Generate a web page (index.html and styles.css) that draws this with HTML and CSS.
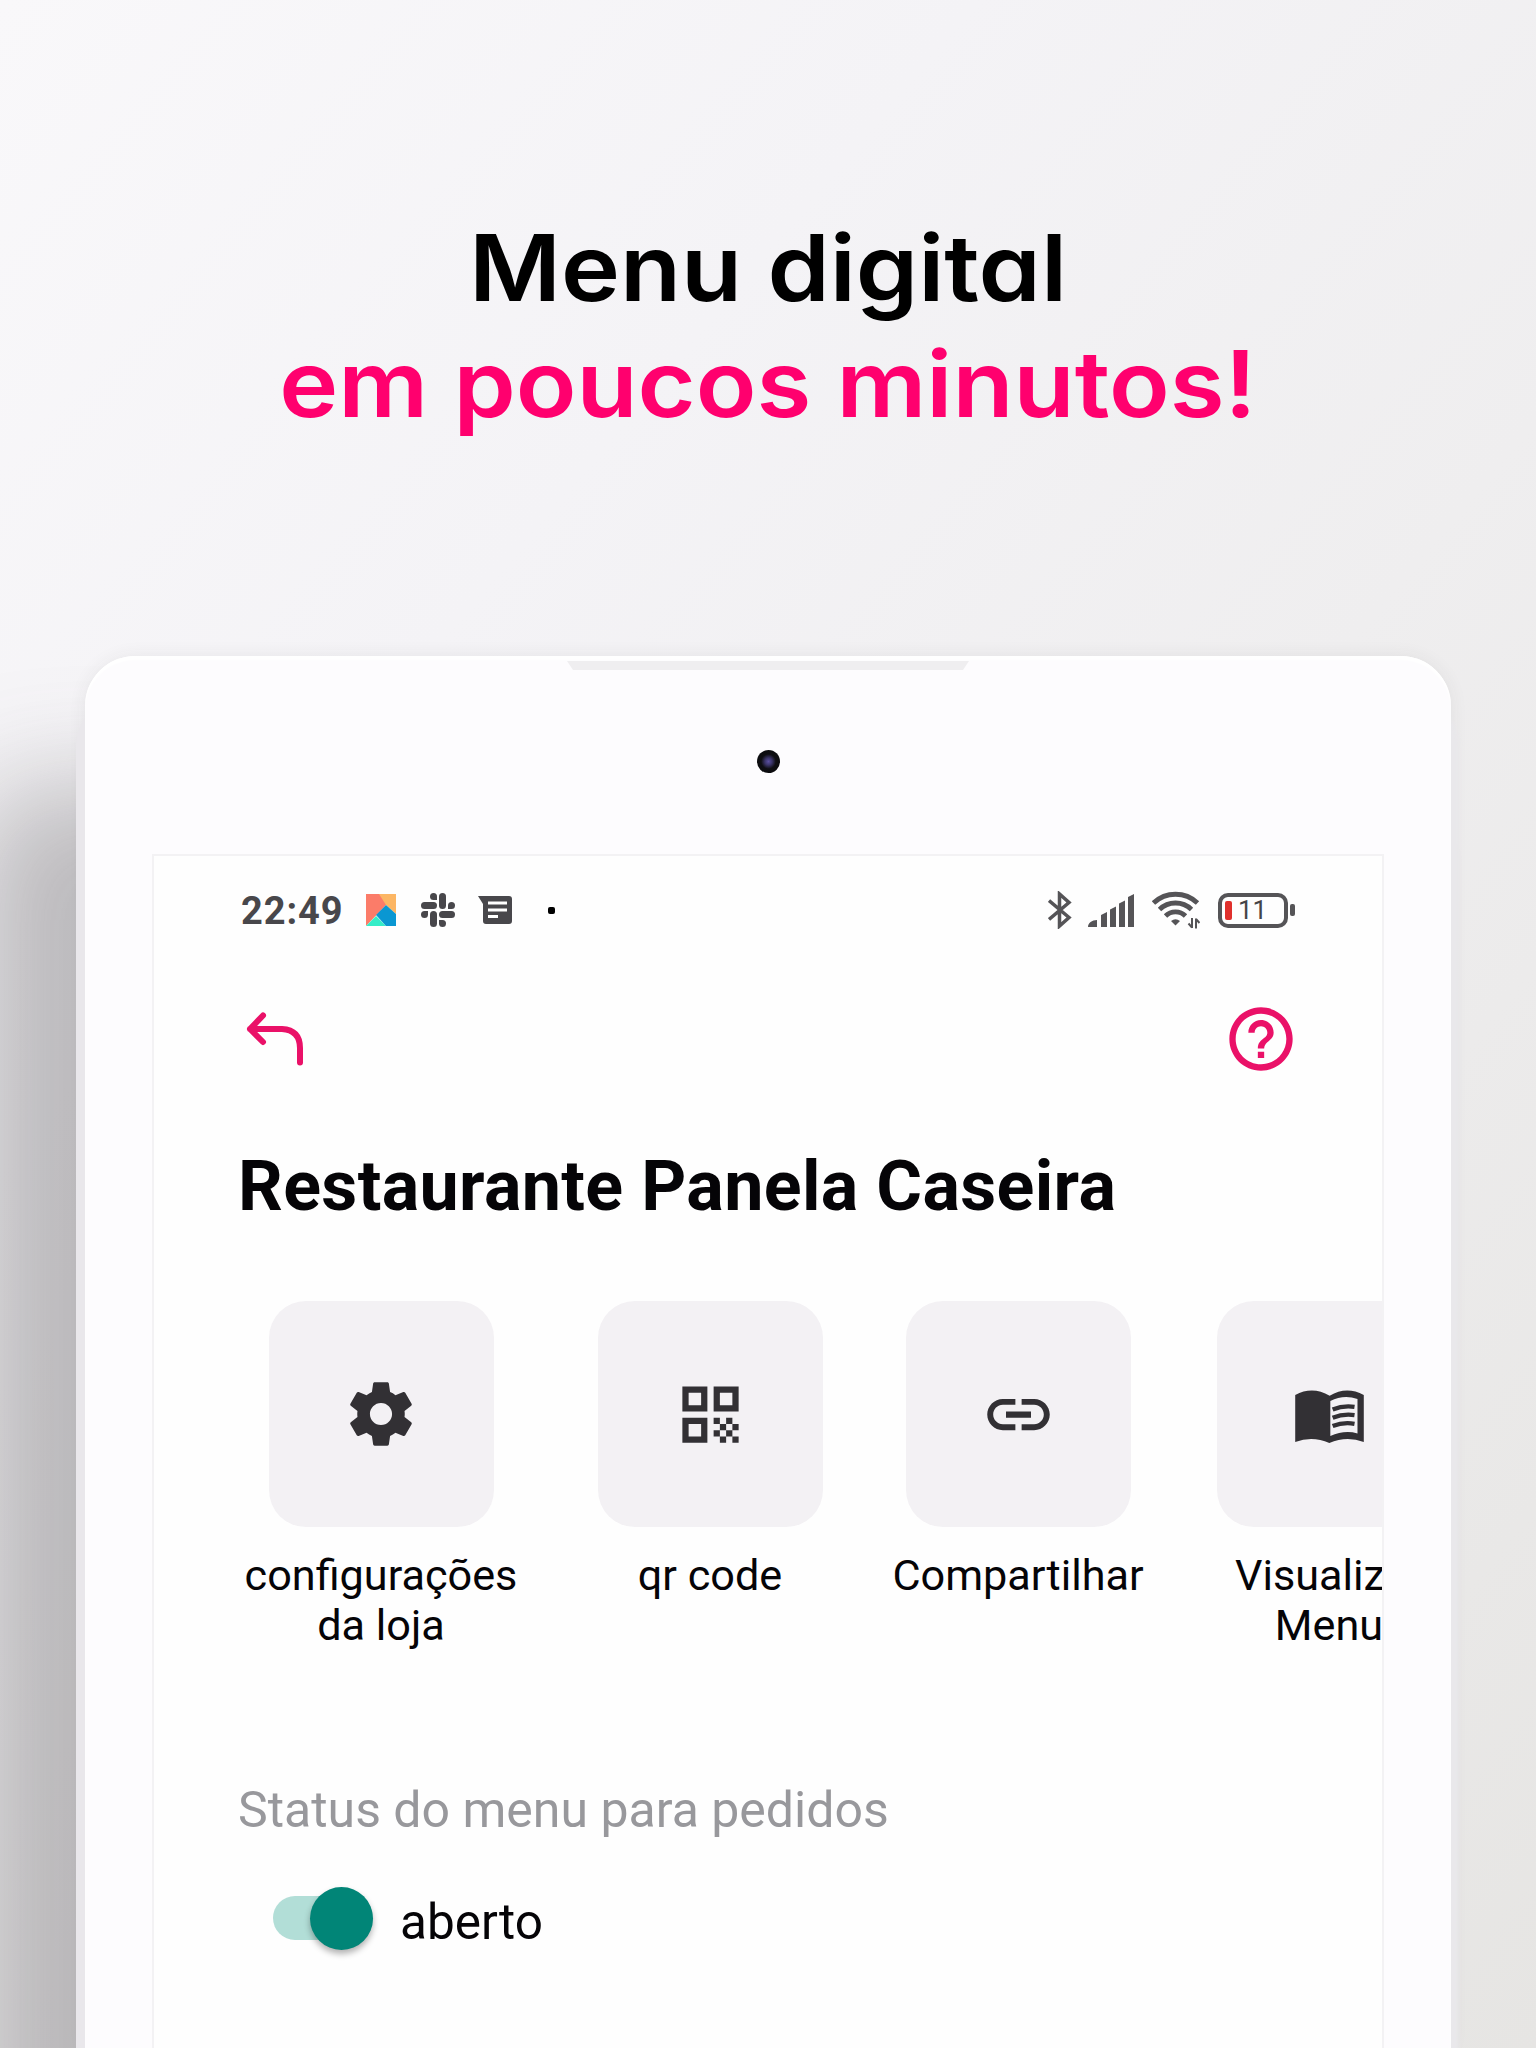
FILE: index.html
```html
<!DOCTYPE html>
<html lang="pt-BR">
<head>
    <meta charset="UTF-8">
    <meta name="viewport" content="width=device-width, initial-scale=1.0">
    <title>Menu digital</title>
    <link rel="stylesheet" href="styles.css">
</head>
<body>
    <h1 class="headline">
        <span class="line-dark">Menu digital</span>
        <span class="line-pink">em poucos minutos!</span>
    </h1>

    <div class="tablet">
        <div class="speaker"></div>
        <div class="camera"></div>

        <div class="screen">
            <!-- status bar -->
            <div class="status-bar">
                <div class="status-left">
                    <span class="time">22:49</span>
                    <svg class="ic-kite" viewBox="0 0 30 32">
                        <path fill="#fb7c69" d="M0 0h14l7 10L0 32z"/>
                        <path fill="#fcb664" d="M13 0h17v20L20 11z"/>
                        <path fill="#35edc8" d="M10 22l10 10H0z"/>
                        <path fill="#0a97d2" d="M10 21l10-10 10 9v12H20z"/>
                    </svg>
                    <svg class="ic-slack" viewBox="0 0 34 34" fill="#48474b">
                        <rect x="18" y="0" width="7" height="16" rx="3.5"/>
                        <rect x="18" y="18" width="16" height="7" rx="3.5"/>
                        <rect x="9" y="18" width="7" height="16" rx="3.5"/>
                        <rect x="0" y="9" width="16" height="7" rx="3.5"/>
                        <path d="M16 7h-3.500a3.500 3.500 0 1 1 3.500-3.500z"/>
                        <path d="M27 16v-3.500a3.500 3.500 0 1 1 3.500 3.500z"/>
                        <path d="M18 27h3.500a3.500 3.500 0 1 1-3.500 3.500z"/>
                        <path d="M7 18v3.500a3.500 3.500 0 1 1-3.500-3.500z"/>
                    </svg>
                    <svg class="ic-message" viewBox="0 0 34 28">
                        <path fill="#48474b" d="M0 0h31a3 3 0 0 1 3 3v22a3 3 0 0 1-3 3H8a3 3 0 0 1-3-3V8z"/>
                        <path stroke="#fff" stroke-width="2.800" d="M10 7h19M10 14h19M10 20.500h10"/>
                    </svg>
                    <span class="dot"></span>
                </div>
                <div class="status-right">
                    <svg class="ic-bluetooth" viewBox="0 0 24 38" fill="none" stroke="#555457" stroke-width="3.500">
                        <path d="M1 9.500l20 17L11.500 35V3L21 11.500l-20 17"/>
                    </svg>
                    <svg class="ic-signal" viewBox="0 0 46 33" fill="#555457">
                        <path d="M0 33c0-4 4-7 9-7v7zM13 21l6-3v15h-6zM22 15.500l6-3V33h-6zM31 9.500l6-3V33h-6zM40 3l6-3v33h-6z"/>
                    </svg>
                    <svg class="ic-wifi" viewBox="0 0 48 38" fill="none" stroke="#555457" stroke-width="4.800">
                        <path d="M1.500 12a32 32 0 0 1 44 0M7.500 18.500a23 23 0 0 1 32 0M13.500 25a14 14 0 0 1 20 0"/>
                        <path fill="#555457" stroke="none" d="M19 30q4.500-3.500 9 0l-4.500 4.500z"/>
                        <path stroke-width="2" d="M40 27v10M36.500 32.500l3.500 4M44 37.500v-10M47.500 32l-3.500-4"/>
                    </svg>
                    <div class="battery"><i class="battery-level"></i><span>11</span></div>
                    <i class="battery-tip"></i>
                </div>
            </div>

            <div class="toolbar">
                <svg class="ic-back" viewBox="0 0 58 54" fill="none" stroke="#ea1168" stroke-width="6" stroke-linecap="round" stroke-linejoin="round">
                    <path d="M17 3.500L4 17l13 13M4 17h32q18 1 18 19v14.500"/>
                </svg>
                <svg class="ic-help" viewBox="0 0 24 24" fill="#ea1168">
                    <path d="M11 18h2v-2h-2v2zm1-16C6.480 2 2 6.480 2 12s4.480 10 10 10 10-4.480 10-10S17.520 2 12 2zm0 18c-4.410 0-8-3.590-8-8s3.590-8 8-8 8 3.590 8 8-3.590 8-8 8zm0-14c-2.210 0-4 1.790-4 4h2c0-1.100.9-2 2-2s2 .9 2 2c0 2-3 1.750-3 5h2c0-2.250 3-2.500 3-5 0-2.210-1.790-4-4-4z"/>
                </svg>
            </div>

            <h2 class="store-name">Restaurante Panela Caseira</h2>

            <div class="actions">
                <div class="action action-config">
                    <div class="tile">
                        <svg class="ic-gear" viewBox="0 0 24 24">
                            <path d="M19.430 12.980c.04-.32.07-.64.07-.98s-.03-.66-.07-.98l2.110-1.650c.19-.15.24-.42.12-.64l-2-3.460c-.12-.22-.39-.3-.61-.22l-2.490 1c-.52-.4-1.080-.73-1.690-.98l-.38-2.650C14.460 2.180 14.250 2 14 2h-4c-.25 0-.46.18-.49.42l-.38 2.650c-.61.25-1.170.59-1.690.98l-2.490-1c-.23-.09-.49 0-.61.22l-2 3.460c-.13.22-.07.49.12.64l2.110 1.650c-.04.32-.07.65-.07.98s.03.66.07.98l-2.110 1.650c-.19.15-.24.42-.12.64l2 3.460c.12.22.39.3.61.22l2.490-1c.52.4 1.080.73 1.690.98l.38 2.650c.03.24.24.42.49.42h4c.25 0 .46-.18.49-.42l.38-2.650c.61-.25 1.170-.59 1.690-.98l2.490 1c.23.09.49 0 .61-.22l2-3.460c.12-.22.07-.49-.12-.64l-2.110-1.650zM12 15.500c-1.930 0-3.500-1.570-3.500-3.500s1.570-3.500 3.500-3.500 3.500 1.570 3.500 3.500-1.570 3.500-3.500 3.500z"/>
                        </svg>
                    </div>
                    <p class="label">configurações<br>da loja</p>
                </div>
                <div class="action action-qr">
                    <div class="tile">
                        <svg class="ic-tile" viewBox="0 0 24 24">
                            <path d="M3 11h8V3H3v8zm2-6h4v4H5V5zM3 21h8v-8H3v8zm2-6h4v4H5v-4zM13 3v8h8V3h-8zm6 6h-4V5h4v4zM19 19h2v2h-2zM13 13h2v2h-2zM15 15h2v2h-2zM13 17h2v2h-2zM15 19h2v2h-2zM17 17h2v2h-2zM17 13h2v2h-2zM19 15h2v2h-2z"/>
                        </svg>
                    </div>
                    <p class="label">qr code</p>
                </div>
                <div class="action action-share">
                    <div class="tile">
                        <svg class="ic-tile" viewBox="0 0 24 24">
                            <path d="M3.900 12c0-1.710 1.390-3.100 3.100-3.100h4V7H7c-2.760 0-5 2.240-5 5s2.240 5 5 5h4v-1.900H7c-1.710 0-3.100-1.390-3.100-3.100zM8 13h8v-2H8v2zm9-6h-4v1.900h4c1.710 0 3.100 1.390 3.100 3.100s-1.390 3.100-3.100 3.100h-4V17h4c2.760 0 5-2.240 5-5s-2.240-5-5-5z"/>
                        </svg>
                    </div>
                    <p class="label">Compartilhar</p>
                </div>
                <div class="action action-view">
                    <div class="tile">
                        <svg class="ic-book" viewBox="0 0 207 160">
                            <path d="M0 15Q52-13 104 17Q155-13 207 15V157Q155 138 103 160Q52 138 0 157zM106 33V139Q148 120 188 131V27Q146 13 106 33z" fill-rule="evenodd"/>
                            <path fill="none" stroke="#323034" stroke-width="13" d="M113 59Q145 46 179 51M113 84Q145 71 179 76M113 109Q145 96 179 102"/>
                        </svg>
                    </div>
                    <p class="label">Visualizar<br>Menu</p>
                </div>
            </div>

            <p class="section-title">Status do menu para pedidos</p>
            <div class="switch-row">
                <div class="switch"><div class="thumb"></div></div>
                <span class="switch-text">aberto</span>
            </div>
        </div>
    </div>
</body>
</html>
```

FILE: styles.css
```css
* {
    box-sizing: border-box;
}
body {
    margin: 0;
    width: 1536px;
    height: 2048px;
    overflow: hidden;
    font-family: Roboto, sans-serif;
    color: #050407;
    background: linear-gradient(130deg, #f9f8fa 0%, #f4f3f6 30%, #efeeef 58%, #e6e5e3 100%);
}
svg {
    display: block;
    flex: none;
}
.headline {
    margin: 0;
    height: 656px;
    padding-top: 210px;
    font-family: Inter, sans-serif;
    font-feature-settings: "cv11";
    font-size: 92px;
    font-weight: 600;
    line-height: 116px;
    text-align: center;
    white-space: nowrap;
    transform: scaleX(1.085);
}
.headline span {
    display: block;
}
.line-dark {
    color: #000;
}
.line-pink {
    color: #ff006e;
}

/* tablet */
.tablet {
    width: 1366px;
    height: 1392px;
    margin-left: 85px;
    border-radius: 50px 50px 0 0;
    background: #fdfcfe;
    box-shadow: inset 0 4px 2px #fff, -9px 40px 0 #e9e7eb, 8px 40px 4px #e9e8eb, 0 0 18px rgba(60, 55, 60, 0.07), -110px 130px 110px rgba(90, 86, 90, 0.36);
    display: flex;
    flex-direction: column;
    align-items: center;
}
.speaker {
    width: 402px;
    height: 9px;
    margin-top: 5px;
    background: #efeef0;
    clip-path: polygon(0 0, 100% 0, 98.500% 100%, 1.500% 100%);
}
.camera {
    width: 23px;
    height: 23px;
    margin-top: 80px;
    border-radius: 50%;
    background: radial-gradient(circle, #5a4fa0 0%, #3a3468 22%, #0e0e12 45%, #08080a 100%);
}
.screen {
    flex: 1;
    width: 1232px;
    margin-top: 81px;
    border: 2px solid #f3f2f4;
    border-bottom: 0;
    background: #fefefe;
    overflow: hidden;
}

/* status bar */
.status-bar {
    display: flex;
    justify-content: space-between;
    align-items: center;
    height: 44px;
    margin-top: 32px;
    padding: 0 87px 0 87px;
}
.status-left,
.status-right {
    display: flex;
    align-items: center;
}
.time {
    width: 125px;
    padding-top: 2px;
    font-size: 38px;
    font-weight: 700;
    letter-spacing: 0.900px;
    color: #48474b;
}
.ic-kite {
    width: 30px;
    height: 32px;
}
.ic-slack {
    width: 34px;
    height: 34px;
    margin-left: 25px;
}
.ic-message {
    width: 34px;
    height: 28px;
    margin-left: 23px;
}
.dot {
    width: 7px;
    height: 7px;
    margin-left: 36px;
    border-radius: 2px;
    background: #000;
}
.ic-bluetooth {
    width: 24px;
    height: 38px;
}
.ic-signal {
    width: 46px;
    height: 33px;
    margin-left: 16px;
}
.ic-wifi {
    width: 48px;
    height: 38px;
    margin-left: 18px;
}
.battery {
    display: flex;
    align-items: center;
    width: 70px;
    height: 35px;
    margin-left: 18px;
    padding-left: 3px;
    border: 4.500px solid #555457;
    border-radius: 10px;
    font-size: 26px;
    color: #454447;
}
.battery-level {
    width: 7px;
    height: 19px;
    margin-right: 6px;
    border-radius: 2px;
    background: #e0302c;
}
.battery-tip {
    width: 5px;
    height: 12px;
    margin-left: 2px;
    border-radius: 2px;
    background: #555457;
}

.toolbar {
    display: flex;
    justify-content: space-between;
    align-items: center;
    height: 76px;
    margin-top: 69px;
    padding: 0 83px 0 92px;
}
.ic-back {
    width: 58px;
    height: 54px;
    margin-bottom: 1px;
}
.ic-help {
    width: 76px;
    height: 76px;
}

.store-name {
    margin: 68px 0 0 84px;
    font-size: 70px;
    font-weight: 700;
    letter-spacing: 0.350px;
    line-height: 82px;
    white-space: nowrap;
}

/* shortcuts, the last one runs off the screen */
.actions {
    display: flex;
    gap: 76px;
    width: 1400px;
    height: 370px;
    margin-top: 74px;
    padding-left: 86px;
}
.action {
    display: flex;
    flex-direction: column;
    align-items: center;
    flex: none;
}
.action-config {
    width: 282px;
}
.action-qr {
    width: 224px;
}
.action-share {
    width: 240px;
}
.action-view {
    width: 230px;
}
.tile {
    display: flex;
    justify-content: center;
    align-items: center;
    width: 225px;
    height: 226px;
    border-radius: 37px;
    background: #f3f1f4;
}
.tile svg {
    fill: #323034;
}
.ic-gear {
    width: 76px;
    height: 76px;
}
.ic-tile {
    width: 75px;
    height: 75px;
}
.ic-book {
    width: 69px;
    height: 53px;
    margin-top: 5px;
}
.label {
    margin: 24px 0 0;
    font-size: 43.200px;
    line-height: 50px;
    text-align: center;
    white-space: nowrap;
}

.section-title {
    margin: 109px 0 0 84px;
    font-size: 50px;
    line-height: 60px;
    color: #98989c;
}
.switch-row {
    display: flex;
    align-items: center;
    gap: 27px;
    height: 64px;
    margin: 46px 0 0 119px;
    font-size: 49.500px;
}
.switch {
    display: flex;
    justify-content: flex-end;
    align-items: center;
    width: 100px;
    height: 44px;
    border-radius: 22px;
    background: #b2ded7;
}
.switch-text {
    padding-top: 7px;
}
.thumb {
    width: 63px;
    height: 63px;
    flex: none;
    border-radius: 50%;
    background: #018577;
    box-shadow: 0 4px 6px rgba(0, 0, 0, 0.3);
}
```
